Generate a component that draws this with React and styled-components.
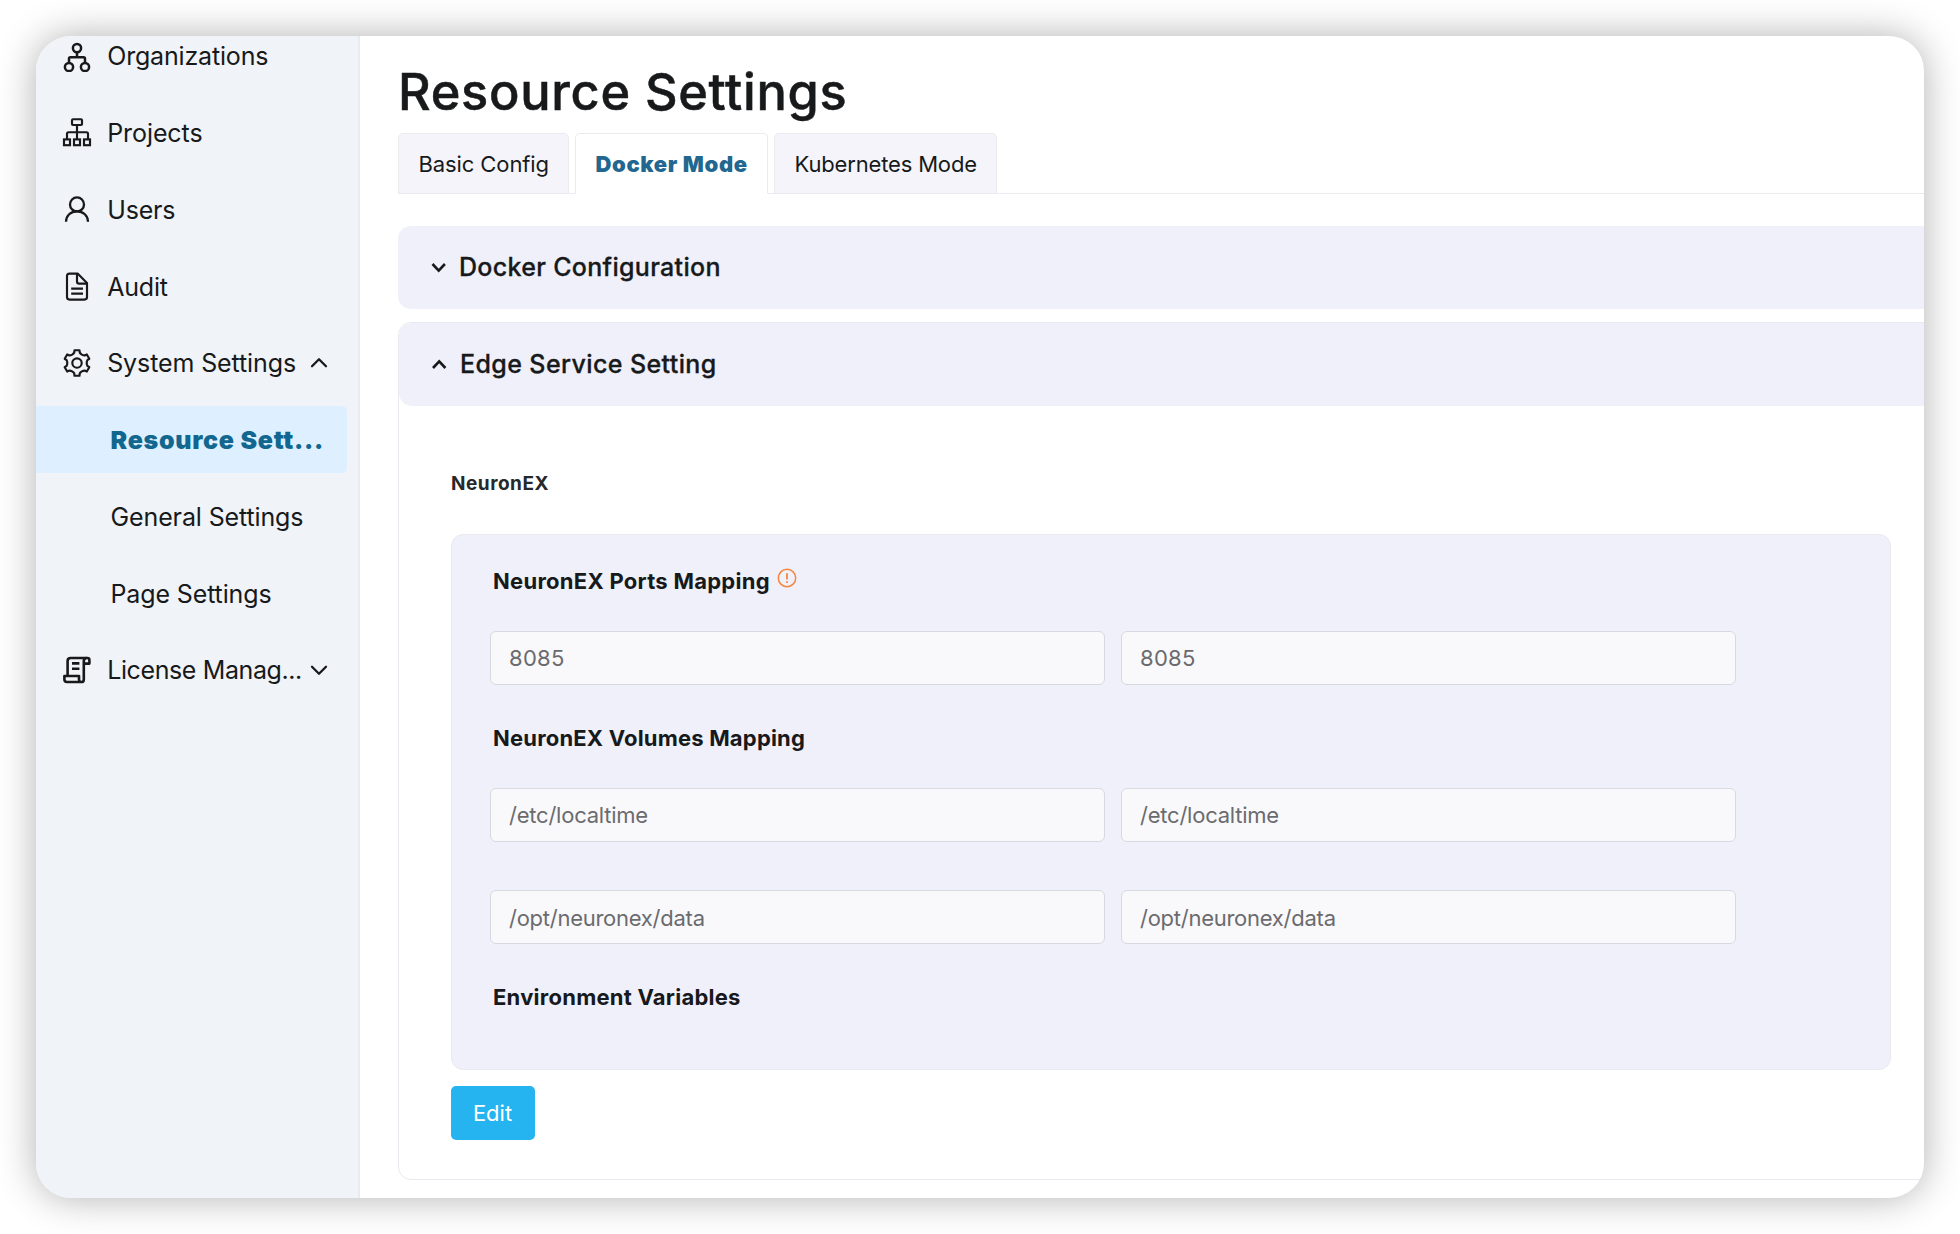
import React from "react";
import styled, { createGlobalStyle, css } from "styled-components";

const color = {
  ink: "#17191a",
  sidebar: "#f0f3f8",
  line: "#e9e9f0",
  lavender: "#f0f0fa",
  activeBg: "#def0ff",
  activeText: "#11678f",
  tabActive: "#22678f",
  button: "#26b4f1",
  warning: "#f6863c",
};

const GlobalStyle = createGlobalStyle`
  * { box-sizing: border-box; }
  body {
    margin: 0;
    background: #fff;
    color: ${color.ink};
    font-family: Inter, "Liberation Sans", sans-serif;
  }
`;

const Page = styled.div`
  width: 1960px;
  height: 1234px;
  padding: 36px;
  overflow: hidden;
`;

const Window = styled.div`
  display: flex;
  height: 1162px;
  border-radius: 35px;
  overflow: hidden;
  background: #fff;
  box-shadow: 0 0 38px rgba(0, 0, 0, 0.31);
`;

const Tracked = styled.span`
  letter-spacing: ${(p) => p.$tracking || 0}px;
  white-space: nowrap;
`;

/* Sidebar */

const Sidebar = styled.nav`
  flex: 0 0 324px;
  display: flex;
  flex-direction: column;
  gap: 9.75px;
  margin-top: -13.7px;
  padding-right: 11px;
  background: ${color.sidebar};
  border-right: 2px solid #e9ebf0;
`;

const NavItem = styled.a`
  flex: 0 0 67px;
  display: flex;
  align-items: center;
  padding: 1px 19px 0 ${(p) => (p.$nested ? 74.5 : 25)}px;
  font-size: 25px;
  line-height: 30px;
  border-radius: 0 5px 5px 0;
  ${(p) =>
    p.$active &&
    css`
      background: ${color.activeBg};
      color: ${color.activeText};
      font-weight: 900;
    `}
`;

const NavIcon = styled.svg`
  flex: 0 0 32px;
  width: 32px;
  height: 32px;
  margin-right: 14.2px;
  fill: none;
  stroke: ${color.ink};
  stroke-width: 2.15;
`;

const NavChevron = styled.svg`
  flex: 0 0 18px;
  width: 18px;
  height: 18px;
  margin-left: auto;
  fill: none;
  stroke: ${color.ink};
  stroke-width: 2.3;
  stroke-linecap: round;
  stroke-linejoin: round;
`;

/* Main column */

const Main = styled.main`
  flex: 0 0 auto;
  width: 1584px;
  padding: 26px 0 0 38px;
`;

const Title = styled.h1`
  margin: 0 0 11px;
  font-size: 50.5px;
  font-weight: 500;
  line-height: 60px;
  letter-spacing: 0.7px;
  -webkit-text-stroke: 0.5px ${color.ink};
`;

const Tabs = styled.div`
  display: flex;
  gap: 6px;
  height: 61px;
  margin-bottom: 32px;
  border-bottom: 1px solid #ebebef;
`;

const Tab = styled.div`
  width: ${(p) => p.$width}px;
  height: 61px;
  padding-left: 19.5px;
  border: 1px solid #ebebef;
  border-radius: 5px 5px 0 0;
  background: #f4f4fa;
  font-size: 22px;
  line-height: 60px;
  ${(p) =>
    p.$active &&
    css`
      background: #fff;
      border-bottom-color: #fff;
      color: ${color.tabActive};
      font-weight: 900;
    `}
`;

const Section = styled.section`
  width: 1546px;
  margin-bottom: 13px;
  border-radius: 13px;
  ${(p) =>
    p.$open &&
    css`
      height: 858px;
      border: 1px solid ${color.line};
    `}
`;

const SectionHeader = styled.header`
  display: flex;
  align-items: center;
  height: 83px;
  padding: 0 0 1px ${(p) => (p.$open ? 31 : 32)}px;
  border-radius: 13px;
  background: ${color.lavender};
  font-size: 25px;
  font-weight: 500;
  line-height: 30px;
  -webkit-text-stroke: 0.3px ${color.ink};
`;

const SectionChevron = styled.svg`
  width: 18px;
  height: 18px;
  margin-right: ${(p) => (p.$open ? 12 : 11)}px;
  fill: none;
  stroke: ${color.ink};
  stroke-width: 2.6;
`;

const SectionBody = styled.div`
  padding: 66px 52px 0;
`;

const GroupName = styled.h2`
  margin: 0 0 38px;
  font-size: 19px;
  font-weight: 700;
  line-height: 24px;
  letter-spacing: 0.5px;
  color: #26282b;
`;

const Panel = styled.div`
  height: 536px;
  margin-bottom: 16px;
  padding: 32px 38px 0;
  border: 1px solid #e9e9f0;
  border-radius: 12px;
  background: ${color.lavender};
`;

const FieldLabel = styled.h3`
  display: flex;
  align-items: flex-start;
  margin: ${(p) => (p.$first ? 0 : 39)}px 0 36px 3px;
  font-size: 22px;
  font-weight: 700;
  line-height: 28px;
`;

const WarningIcon = styled.svg`
  width: 20px;
  height: 20px;
  margin: 1px 0 0 7px;
  fill: none;
  stroke: ${color.warning};
  stroke-width: 1.5;
`;

const FieldRow = styled.div`
  display: grid;
  grid-template-columns: 615px 615px;
  gap: 16px;
  & + & {
    margin-top: 48px;
  }
`;

const Field = styled.div`
  height: 54px;
  padding-left: 18px;
  border: 1px solid #d8d8e0;
  border-radius: 6px;
  background: #f9f9fc;
  color: #6b6b6e;
  font-size: 22px;
  line-height: ${(p) => (p.$low ? 54 : 52)}px;
`;

const EditButton = styled.button`
  display: block;
  width: 84px;
  height: 54px;
  padding: 0 1px 0 0;
  border: 0;
  border-radius: 5px;
  background: ${color.button};
  color: #fff;
  font-family: inherit;
  font-size: 22px;
  line-height: 54px;
`;

/* Outline of a six-toothed gear centred on (16, 16). */
const gearPath = (() => {
  const at = (deg, r) => {
    const a = (deg * Math.PI) / 180;
    return `${(16 + r * Math.cos(a)).toFixed(2)} ${(16 + r * Math.sin(a)).toFixed(2)}`;
  };
  let d = "";
  for (let k = 0; k < 6; k += 1) {
    const a = -90 + k * 60;
    d += `${k ? "L" : "M"}${at(a - 11, 13)} L${at(a + 11, 13)} L${at(a + 15, 10.7)} Q${at(a + 20, 9.9)} ${at(a + 30, 9.7)} Q${at(a + 40, 9.9)} ${at(a + 45, 10.7)} `;
  }
  return `${d}Z`;
})();

const icons = {
  organizations: (
    <g strokeWidth="2.5">
      <circle cx="16" cy="8.1" r="4.1" />
      <circle cx="8" cy="27" r="4.1" />
      <circle cx="24" cy="27" r="4.1" />
      <path d="M16 12.3V17.3M8 22.9V18.8Q8 17.3 9.5 17.3H22.5Q24 17.3 24 18.8V22.9" />
    </g>
  ),
  projects: (
    <>
      <rect x="11" y="2.2" width="10" height="5.8" rx="1" />
      <rect x="3" y="22.4" width="6" height="5.8" />
      <rect x="13" y="22.4" width="6" height="5.8" />
      <rect x="23" y="22.4" width="6" height="5.8" />
      <path d="M16 8V22.4M6 22.4V16.7Q6 15.2 7.5 15.2H25.5Q27 15.2 27 16.7V22.4" />
    </>
  ),
  users: (
    <g strokeWidth="2.3">
      <circle cx="16" cy="10.4" r="7" />
      <path d="M5 27.8C5 21.5 9.8 17.4 16 17.4S27 21.5 27 27.8" />
    </g>
  ),
  audit: (
    <>
      <path d="M16.6 2.6H8.5Q6 2.6 6 5.1V26.1Q6 28.6 8.5 28.6H23.5Q26 28.6 26 26.1V12Z" strokeLinejoin="round" />
      <path d="M16 2.6V10.4Q16 12.6 18.2 12.6H26M10.2 17.6H22M10.2 22.6H22" />
    </>
  ),
  settings: (
    <>
      <path d={gearPath} strokeLinejoin="round" />
      <circle cx="16" cy="16" r="4.7" />
    </>
  ),
  license: (
    <g strokeWidth="2.6" strokeLinejoin="round">
      <path d="M6.6 21.8V7Q6.6 4 9.6 4H26.4Q28.4 4 28.4 6V9.6H22.8" />
      <path d="M25.6 4Q22.8 4 22.8 7V25.4Q22.8 28 20.4 28H5.8Q3.4 28 3.4 25.6V22H18V25.4Q18 28 20.4 28" />
      <path d="M11 9.4H18.4M11 14.8H18.4" />
    </g>
  ),
};

const navigation = [
  { label: "Organizations", icon: "organizations", tracking: -0.17 },
  { label: "Projects", icon: "projects", tracking: -0.08 },
  { label: "Users", icon: "users", tracking: -0.15 },
  { label: "Audit", icon: "audit", tracking: -0.2 },
  { label: "System Settings", icon: "settings", tracking: -0.11, chevron: "up" },
  { label: "Resource Sett...", nested: true, active: true, tracking: 0.72 },
  { label: "General Settings", nested: true, tracking: -0.12 },
  { label: "Page Settings", nested: true, tracking: -0.13 },
  { label: "License Manag...", icon: "license", tracking: -0.39, chevron: "down" },
];

const tabs = [
  { label: "Basic Config", width: 171, tracking: -0.1 },
  { label: "Docker Mode", width: 193, tracking: 0.62, active: true },
  { label: "Kubernetes Mode", width: 223, tracking: -0.16 },
];

function SectionTitle({ label, tracking, open }) {
  return (
    <SectionHeader $open={open}>
      <SectionChevron $open={open} viewBox="0 0 18 18">
        <path d={open ? "M3 13L9.2 6.3L15.4 13" : "M2.5 6L8.7 12.7L14.9 6"} />
      </SectionChevron>
      <Tracked $tracking={tracking}>{label}</Tracked>
    </SectionHeader>
  );
}

function Pair({ value, tracking, low }) {
  return (
    <FieldRow>
      <Field $low={low}><Tracked $tracking={tracking}>{value}</Tracked></Field>
      <Field $low={low}><Tracked $tracking={tracking}>{value}</Tracked></Field>
    </FieldRow>
  );
}

export default function App() {
  return (
    <Page>
      <GlobalStyle />
      <Window>
        <Sidebar>
          {navigation.map((item) => (
            <NavItem key={item.label} $nested={item.nested} $active={item.active}>
              {item.icon && <NavIcon viewBox="0 0 32 32">{icons[item.icon]}</NavIcon>}
              <Tracked $tracking={item.tracking}>{item.label}</Tracked>
              {item.chevron && (
                <NavChevron viewBox="0 0 18 18">
                  <path d={item.chevron === "up" ? "M2 12.3L9 5.3L16 12.3" : "M2 5.7L9 12.7L16 5.7"} />
                </NavChevron>
              )}
            </NavItem>
          ))}
        </Sidebar>
        <Main>
          <Title>Resource Settings</Title>
          <Tabs>
            {tabs.map((tab) => (
              <Tab key={tab.label} $width={tab.width} $active={tab.active}>
                <Tracked $tracking={tab.tracking}>{tab.label}</Tracked>
              </Tab>
            ))}
          </Tabs>
          <Section>
            <SectionTitle label="Docker Configuration" tracking={0.31} />
          </Section>
          <Section $open>
            <SectionTitle label="Edge Service Setting" tracking={0.4} open />
            <SectionBody>
              <GroupName>NeuronEX</GroupName>
              <Panel>
                <FieldLabel $first>
                  <Tracked $tracking={0.27}>NeuronEX Ports Mapping</Tracked>
                  <WarningIcon viewBox="0 0 20 20">
                    <circle cx="10" cy="10" r="8.7" />
                    <path d="M10 5.2V11.4M10 13.3V15" strokeWidth="1.8" />
                  </WarningIcon>
                </FieldLabel>
                <Pair value="8085" tracking={0.3} />
                <FieldLabel><Tracked $tracking={0.19}>NeuronEX Volumes Mapping</Tracked></FieldLabel>
                <Pair value="/etc/localtime" tracking={-0.23} />
                <Pair value="/opt/neuronex/data" tracking={-0.26} low />
                <FieldLabel><Tracked $tracking={0.24}>Environment Variables</Tracked></FieldLabel>
              </Panel>
              <EditButton>Edit</EditButton>
            </SectionBody>
          </Section>
        </Main>
      </Window>
    </Page>
  );
}
